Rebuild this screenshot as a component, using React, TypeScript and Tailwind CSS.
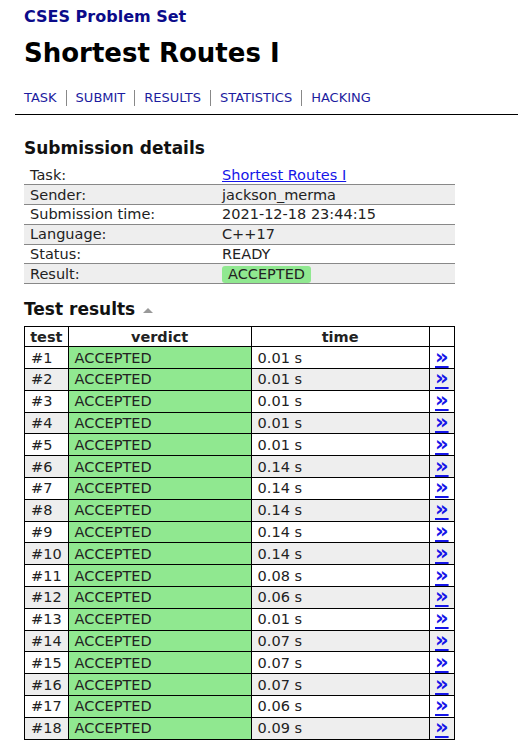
const details = [
  { label: 'Task:', value: 'Shortest Routes I', link: true },
  { label: 'Sender:', value: 'jackson_merma' },
  { label: 'Submission time:', value: '2021-12-18 23:44:15' },
  { label: 'Language:', value: 'C++17' },
  { label: 'Status:', value: 'READY' },
  { label: 'Result:', value: 'ACCEPTED', badge: true },
];

const times = [
  '0.01', '0.01', '0.01', '0.01', '0.01', '0.14', '0.14', '0.14', '0.14',
  '0.14', '0.08', '0.06', '0.01', '0.07', '0.07', '0.07', '0.06', '0.09',
];

const navItems = ['TASK', 'SUBMIT', 'RESULTS', 'STATISTICS', 'HACKING'];

const App = () => {
  return (
    <div className="min-h-[754px] bg-white text-[#222] font-['DejaVu_Sans',Verdana,sans-serif]">
      {/* Header */}
      <div className="pl-6 pt-[7px]">
        <div className="text-[16px] font-bold text-[#0b0b8a] leading-[20px]">CSES Problem Set</div>
        <h1 className="mt-[9px] text-[26px] font-bold text-black leading-[34px]">Shortest Routes I</h1>
        <div className="mt-[20px] flex items-center text-[13px] leading-[16px] text-[#1c1ca0]">
          {navItems.map((item, i) => (
            <div key={item} className="flex items-center">
              {i > 0 && <span className="mx-[9px] h-[16px] w-px bg-[#888]" />}
              <span>{item}</span>
            </div>
          ))}
        </div>
      </div>
      <div className="ml-[15px] mt-[8px] h-px bg-black" />

      <div className="px-6">
        {/* Submission details */}
        <h2 className="mt-[22px] text-[17px] font-bold leading-[22px] text-[#111]">Submission details</h2>
        <table className="mt-[6px] w-[431px] border-collapse text-[14.5px]">
          <tbody>
            {details.map((row, i) => (
              <tr key={row.label} className={`${i % 2 === 1 ? 'bg-[#eeeeee]' : 'bg-white'} border-b border-[#888] h-[19.8px]`}>
                <td className="w-[198px] px-[6px] leading-[18px]">{row.label}</td>
                <td className="px-0 leading-[18px]">
                  {row.link ? (
                    <span className="text-[#1515e8] underline">{row.value}</span>
                  ) : row.badge ? (
                    <span className="inline-block rounded-[3px] bg-[#90e890] px-[6px] leading-[17px]">{row.value}</span>
                  ) : (
                    row.value
                  )}
                </td>
              </tr>
            ))}
          </tbody>
        </table>

        {/* Test results */}
        <div className="mt-[14px] flex items-center">
          <h2 className="text-[17px] font-bold leading-[22px] text-[#111]">Test results</h2>
          <svg width="12" height="8" viewBox="0 0 12 8" className="ml-[7px] mt-[1px]">
            <polygon points="1,7 6,2 11,7" fill="#999" />
          </svg>
        </div>
        <table className="mt-[6px] w-[431px] border-collapse border border-black text-[14.5px]">
          <thead>
            <tr className="h-[20px]">
              <th className="w-[43px] border border-black font-bold leading-[18px]">test</th>
              <th className="w-[183px] border border-black font-bold leading-[18px]">verdict</th>
              <th className="w-[178px] border border-black font-bold leading-[18px]">time</th>
              <th className="border border-black" />
            </tr>
          </thead>
          <tbody>
            {times.map((t, i) => {
              const shade = i % 2 === 1 ? 'bg-[#eeeeee]' : 'bg-white';
              return (
                <tr key={i} className="h-[21.8px]">
                  <td className={`${shade} border border-black px-[6px] leading-[18px]`}>#{i + 1}</td>
                  <td className="bg-[#90e890] border border-black px-[6px] leading-[18px]">ACCEPTED</td>
                  <td className={`${shade} border border-black px-[6px] leading-[18px]`}>{t} s</td>
                  <td className={`${shade} border border-black text-center leading-[18px]`}>
                    <span className="text-[21px] font-bold leading-[18px] text-[#1515e8] underline">»</span>
                  </td>
                </tr>
              );
            })}
          </tbody>
        </table>
      </div>
    </div>
  );
};

export default App;
